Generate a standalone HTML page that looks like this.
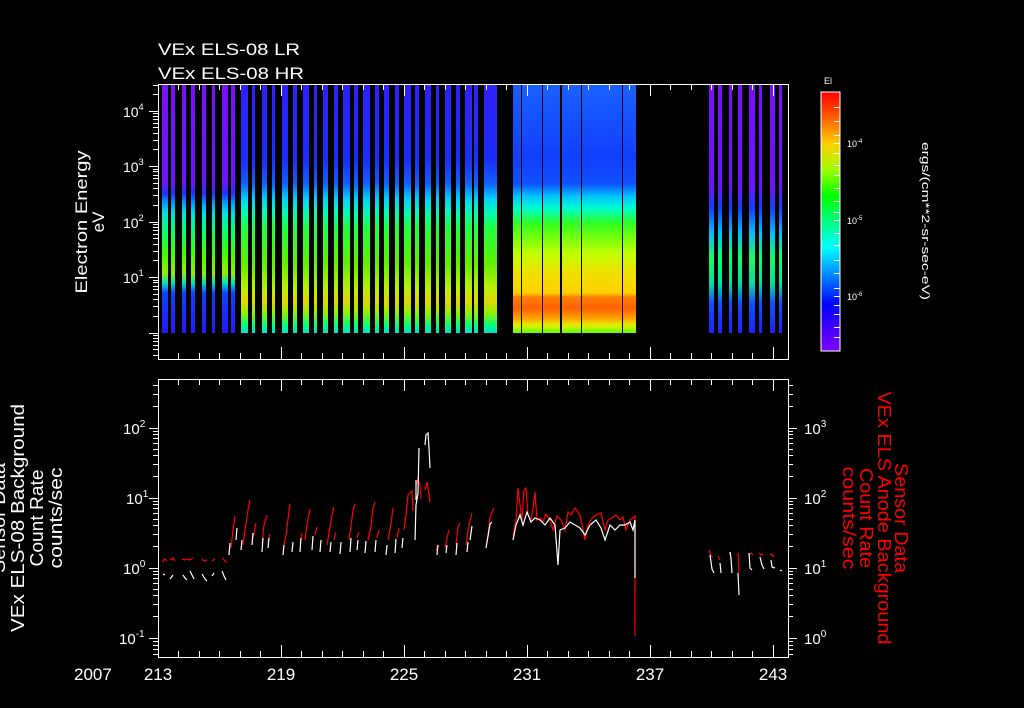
<!DOCTYPE html>
<html><head><meta charset="utf-8"><style>
html,body{margin:0;padding:0;background:#000;width:1024px;height:708px;overflow:hidden}
svg{display:block}
text{font-family:"Liberation Sans",sans-serif;fill:#fff}
</style></head><body>
<svg width="1024" height="708" viewBox="0 0 1024 708" xmlns="http://www.w3.org/2000/svg">
<defs>
<linearGradient id="gA" x1="0" y1="0" x2="0" y2="1">
<stop offset="0" stop-color="#7a10ff"/><stop offset=".4" stop-color="#6a14ff"/><stop offset=".44" stop-color="#2030ff"/><stop offset=".48" stop-color="#00a0ff"/><stop offset=".52" stop-color="#00e0e0"/><stop offset=".58" stop-color="#00ff80"/><stop offset=".68" stop-color="#40ff00"/><stop offset=".76" stop-color="#90f000"/><stop offset=".8" stop-color="#00e0c0"/><stop offset=".84" stop-color="#1040ff"/><stop offset="1" stop-color="#2418ff"/>
</linearGradient>
<linearGradient id="gB" x1="0" y1="0" x2="0" y2="1">
<stop offset="0" stop-color="#3020ff"/><stop offset=".3" stop-color="#1a2cff"/><stop offset=".4" stop-color="#1060ff"/><stop offset=".46" stop-color="#00d0ff"/><stop offset=".52" stop-color="#00ffb0"/><stop offset=".58" stop-color="#20ff40"/><stop offset=".72" stop-color="#60f000"/><stop offset=".82" stop-color="#b8f000"/><stop offset=".87" stop-color="#e0d800"/><stop offset=".92" stop-color="#90f000"/><stop offset=".97" stop-color="#00ff80"/><stop offset="1" stop-color="#00e0d0"/>
</linearGradient>
<linearGradient id="gC" x1="0" y1="0" x2="0" y2="1">
<stop offset="0" stop-color="#1a60ff"/><stop offset=".3" stop-color="#1040ff"/><stop offset=".4" stop-color="#1050ff"/><stop offset=".45" stop-color="#00c0ff"/><stop offset=".5" stop-color="#00ffd0"/><stop offset=".56" stop-color="#30ff20"/><stop offset=".68" stop-color="#c0ff00"/><stop offset=".76" stop-color="#f0e000"/><stop offset=".84" stop-color="#ffd000"/><stop offset=".855" stop-color="#ff8000"/><stop offset=".9" stop-color="#ff6000"/><stop offset=".94" stop-color="#ffa000"/><stop offset=".97" stop-color="#e0f000"/><stop offset="1" stop-color="#60ff00"/>
</linearGradient>
<linearGradient id="gD" x1="0" y1="0" x2="0" y2="1">
<stop offset="0" stop-color="#7a10ff"/><stop offset=".42" stop-color="#6a14ff"/><stop offset=".5" stop-color="#1040ff"/><stop offset=".6" stop-color="#00c0ff"/><stop offset=".7" stop-color="#10ff60"/><stop offset=".8" stop-color="#00e0a0"/><stop offset=".88" stop-color="#1050ff"/><stop offset="1" stop-color="#2020ff"/>
</linearGradient>
<linearGradient id="cb" x1="0" y1="0" x2="0" y2="1">
<stop offset="0" stop-color="#ff0000"/><stop offset=".1" stop-color="#ff6000"/><stop offset=".2" stop-color="#ffd000"/><stop offset=".3" stop-color="#a0ff00"/><stop offset=".4" stop-color="#00ff00"/><stop offset=".6" stop-color="#00ffff"/><stop offset=".7" stop-color="#0090ff"/><stop offset=".82" stop-color="#0000ff"/><stop offset="1" stop-color="#8000ff"/>
</linearGradient>
</defs>

<text x="158" y="55" font-size="17" textLength="142" lengthAdjust="spacingAndGlyphs">VEx ELS-08 LR</text>
<text x="158" y="79" font-size="17" textLength="146" lengthAdjust="spacingAndGlyphs">VEx ELS-08 HR</text>

<g>
<rect x="162" y="84" width="6" height="249" fill="url(#gA)"/>
<rect x="171" y="84" width="4" height="249" fill="url(#gA)"/>
<rect x="182" y="84" width="4" height="249" fill="url(#gA)"/>
<rect x="191" y="84" width="4" height="249" fill="url(#gA)"/>
<rect x="202" y="84" width="4" height="249" fill="url(#gA)"/>
<rect x="212" y="84" width="3" height="249" fill="url(#gA)"/>
<rect x="222" y="84" width="6" height="249" fill="url(#gA)"/>
<rect x="231" y="84" width="4" height="249" fill="url(#gA)"/>
<rect x="241" y="84" width="7" height="249" fill="url(#gB)"/>
<rect x="252" y="84" width="3" height="249" fill="url(#gB)"/>
<rect x="262" y="84" width="5" height="249" fill="url(#gB)"/>
<rect x="272" y="84" width="3" height="249" fill="url(#gB)"/>
<rect x="282" y="84" width="6" height="249" fill="url(#gB)"/>
<rect x="293" y="84" width="4" height="249" fill="url(#gB)"/>
<rect x="303" y="84" width="6" height="249" fill="url(#gB)"/>
<rect x="314" y="84" width="3" height="249" fill="url(#gB)"/>
<rect x="323" y="84" width="5" height="249" fill="url(#gB)"/>
<rect x="334" y="84" width="4" height="249" fill="url(#gB)"/>
<rect x="343" y="84" width="7" height="249" fill="url(#gB)"/>
<rect x="354" y="84" width="4" height="249" fill="url(#gB)"/>
<rect x="363" y="84" width="7" height="249" fill="url(#gB)"/>
<rect x="375" y="84" width="4" height="249" fill="url(#gB)"/>
<rect x="384" y="84" width="5" height="249" fill="url(#gB)"/>
<rect x="395" y="84" width="4" height="249" fill="url(#gB)"/>
<rect x="404" y="84" width="7" height="249" fill="url(#gB)"/>
<rect x="415" y="84" width="4" height="249" fill="url(#gB)"/>
<rect x="425" y="84" width="6" height="249" fill="url(#gB)"/>
<rect x="436" y="84" width="3" height="249" fill="url(#gB)"/>
<rect x="445" y="84" width="6" height="249" fill="url(#gB)"/>
<rect x="456" y="84" width="4" height="249" fill="url(#gB)"/>
<rect x="465" y="84" width="7" height="249" fill="url(#gB)"/>
<rect x="474" y="84" width="4" height="249" fill="url(#gB)"/>
<rect x="484" y="84" width="13" height="249" fill="url(#gB)"/>
<rect x="513" y="84" width="123" height="249" fill="url(#gC)"/>
<rect x="521" y="84" width="1" height="249" fill="#000"/>
<rect x="542" y="84" width="1" height="249" fill="#000"/>
<rect x="560" y="84" width="2" height="249" fill="#000"/>
<rect x="581" y="84" width="1" height="249" fill="#000"/>
<rect x="622" y="84" width="1" height="249" fill="#000"/>
<rect x="709" y="84" width="5" height="249" fill="url(#gD)"/>
<rect x="718" y="84" width="4" height="249" fill="url(#gD)"/>
<rect x="729" y="84" width="3" height="249" fill="url(#gD)"/>
<rect x="738" y="84" width="4" height="249" fill="url(#gD)"/>
<rect x="749" y="84" width="6" height="249" fill="url(#gD)"/>
<rect x="759" y="84" width="3" height="249" fill="url(#gD)"/>
<rect x="770" y="84" width="5" height="249" fill="url(#gD)"/>
<rect x="779" y="84" width="3" height="249" fill="url(#gD)"/>
</g>

<g stroke="#fff" stroke-width="1" fill="none" shape-rendering="crispEdges">
<path d="M158.5,84.5 H788.5 V359.5 H158.5 Z"/>
<path d="M149,333.5h9 M149,277.5h9 M149,222.5h9 M149,166.5h9 M149,111.5h9
M153,316.5h5 M153,306.5h5 M153,299.5h5 M153,294.5h5 M153,289.5h5 M153,286.5h5 M153,282.5h5 M153,280.5h5
M153,260.5h5 M153,251.5h5 M153,244.5h5 M153,238.5h5 M153,234.5h5 M153,230.5h5 M153,227.5h5 M153,224.5h5
M153,205.5h5 M153,195.5h5 M153,188.5h5 M153,183.5h5 M153,178.5h5 M153,175.5h5 M153,171.5h5 M153,169.5h5
M153,149.5h5 M153,140.5h5 M153,133.5h5 M153,127.5h5 M153,123.5h5 M153,119.5h5 M153,116.5h5 M153,113.5h5
M153,94.5h5 M153,85.5h5
M153,335.5h5 M153,338.5h5 M153,341.5h5 M153,345.5h5 M153,349.5h5 M153,355.5h5"/>
<path d="M178.5,84v6 M199.5,84v6 M219.5,84v6 M240.5,84v6 M260.5,84v6 M281.5,84v12 M301.5,84v6 M322.5,84v6 M342.5,84v6 M363.5,84v6 M383.5,84v6 M404.5,84v12 M424.5,84v6 M445.5,84v6 M465.5,84v6 M486.5,84v6 M506.5,84v6 M527.5,84v12 M547.5,84v6 M568.5,84v6 M588.5,84v6 M609.5,84v6 M629.5,84v6 M650.5,84v12 M670.5,84v6 M691.5,84v6 M711.5,84v6 M732.5,84v6 M752.5,84v6 M773.5,84v12"/>
<path d="M178.5,359v-6 M199.5,359v-6 M219.5,359v-6 M240.5,359v-6 M260.5,359v-6 M281.5,359v-12 M301.5,359v-6 M322.5,359v-6 M342.5,359v-6 M363.5,359v-6 M383.5,359v-6 M404.5,359v-12 M424.5,359v-6 M445.5,359v-6 M465.5,359v-6 M486.5,359v-6 M506.5,359v-6 M527.5,359v-12 M547.5,359v-6 M568.5,359v-6 M588.5,359v-6 M609.5,359v-6 M629.5,359v-6 M650.5,359v-12 M670.5,359v-6 M691.5,359v-6 M711.5,359v-6 M732.5,359v-6 M752.5,359v-6 M773.5,359v-12"/>
</g>
<g font-size="14">
<text x="123" y="117">10<tspan font-size="9" dy="-7">4</tspan></text>
<text x="123" y="172">10<tspan font-size="9" dy="-7">3</tspan></text>
<text x="123" y="228">10<tspan font-size="9" dy="-7">2</tspan></text>
<text x="123" y="283">10<tspan font-size="9" dy="-7">1</tspan></text>
</g>
<text transform="translate(87,222) rotate(-90)" text-anchor="middle" font-size="17" textLength="143" lengthAdjust="spacingAndGlyphs">Electron Energy</text>
<text transform="translate(104,222) rotate(-90)" text-anchor="middle" font-size="17">eV</text>

<text x="824" y="84" font-size="9">El</text>
<rect x="821" y="92" width="19" height="259" fill="url(#cb)" stroke="#fff" stroke-width="1"/>
<g stroke="#fff" shape-rendering="crispEdges">
<path d="M834,107.5h6 M834,121.5h6 M834,135.5h6 M834,143.5h6 M834,153.5h6 M834,165.5h6 M834,175.5h6 M834,188.5h6 M834,201.5h6 M834,212.5h6 M834,220.5h6 M834,233.5h6 M834,245.5h6 M834,260.5h6 M834,273.5h6 M834,288.5h6 M834,296.5h6 M834,305.5h6 M834,314.5h6 M834,327.5h6 M834,337.5h6"/>
</g>
<g font-size="9">
<text x="847" y="147">10<tspan font-size="6" dy="-4">-4</tspan></text>
<text x="847" y="224">10<tspan font-size="6" dy="-4">-5</tspan></text>
<text x="847" y="300">10<tspan font-size="6" dy="-4">-6</tspan></text>
</g>
<text transform="translate(922,221) rotate(90)" text-anchor="middle" font-size="11" textLength="158" lengthAdjust="spacingAndGlyphs">ergs/(cm**2-sr-sec-eV)</text>

<g stroke="#fff" stroke-width="1" fill="none" shape-rendering="crispEdges">
<path d="M158.5,379.5 H788.5 V657.5 H158.5 Z"/>
<path d="M149,638.5h9 M149,568.5h9 M149,498.5h9 M149,428.5h9
M153,616.5h5 M153,604.5h5 M153,595.5h5 M153,589.5h5 M153,583.5h5 M153,578.5h5 M153,574.5h5 M153,571.5h5
M153,546.5h5 M153,534.5h5 M153,525.5h5 M153,519.5h5 M153,513.5h5 M153,508.5h5 M153,504.5h5 M153,501.5h5
M153,476.5h5 M153,464.5h5 M153,455.5h5 M153,449.5h5 M153,443.5h5 M153,438.5h5 M153,434.5h5 M153,431.5h5
M153,406.5h5 M153,394.5h5 M153,385.5h5
M153,641.5h5 M153,645.5h5 M153,649.5h5 M153,654.5h5"/>
<path d="M788,638.5h9 M788,568.5h9 M788,498.5h9 M788,428.5h9
M788,616.5h5 M788,604.5h5 M788,595.5h5 M788,589.5h5 M788,583.5h5 M788,578.5h5 M788,574.5h5 M788,571.5h5
M788,546.5h5 M788,534.5h5 M788,525.5h5 M788,519.5h5 M788,513.5h5 M788,508.5h5 M788,504.5h5 M788,501.5h5
M788,476.5h5 M788,464.5h5 M788,455.5h5 M788,449.5h5 M788,443.5h5 M788,438.5h5 M788,434.5h5 M788,431.5h5
M788,406.5h5 M788,394.5h5 M788,385.5h5
M788,641.5h5 M788,645.5h5 M788,649.5h5 M788,654.5h5"/>
<path d="M178.5,379v6 M199.5,379v6 M219.5,379v6 M240.5,379v6 M260.5,379v6 M281.5,379v12 M301.5,379v6 M322.5,379v6 M342.5,379v6 M363.5,379v6 M383.5,379v6 M404.5,379v12 M424.5,379v6 M445.5,379v6 M465.5,379v6 M486.5,379v6 M506.5,379v6 M527.5,379v12 M547.5,379v6 M568.5,379v6 M588.5,379v6 M609.5,379v6 M629.5,379v6 M650.5,379v12 M670.5,379v6 M691.5,379v6 M711.5,379v6 M732.5,379v6 M752.5,379v6 M773.5,379v12"/>
<path d="M178.5,657v-6 M199.5,657v-6 M219.5,657v-6 M240.5,657v-6 M260.5,657v-6 M281.5,657v-12 M301.5,657v-6 M322.5,657v-6 M342.5,657v-6 M363.5,657v-6 M383.5,657v-6 M404.5,657v-12 M424.5,657v-6 M445.5,657v-6 M465.5,657v-6 M486.5,657v-6 M506.5,657v-6 M527.5,657v-12 M547.5,657v-6 M568.5,657v-6 M588.5,657v-6 M609.5,657v-6 M629.5,657v-6 M650.5,657v-12 M670.5,657v-6 M691.5,657v-6 M711.5,657v-6 M732.5,657v-6 M752.5,657v-6 M773.5,657v-12"/>
</g>
<g font-size="15">
<text x="123" y="434">10<tspan font-size="10" dy="-7">2</tspan></text>
<text x="126" y="504">10<tspan font-size="10" dy="-7">1</tspan></text>
<text x="123" y="574">10<tspan font-size="10" dy="-7">0</tspan></text>
<text x="119" y="644">10<tspan font-size="10" dy="-7">-1</tspan></text>
<text x="804" y="434">10<tspan font-size="10" dy="-7">3</tspan></text>
<text x="804" y="504">10<tspan font-size="10" dy="-7">2</tspan></text>
<text x="804" y="574">10<tspan font-size="10" dy="-7">1</tspan></text>
<text x="804" y="644">10<tspan font-size="10" dy="-7">0</tspan></text>
</g>

<g font-size="17">
<text x="74" y="680">2007</text>
<text x="158" y="680" text-anchor="middle">213</text>
<text x="281" y="680" text-anchor="middle">219</text>
<text x="404" y="680" text-anchor="middle">225</text>
<text x="527" y="680" text-anchor="middle">231</text>
<text x="650" y="680" text-anchor="middle">237</text>
<text x="773" y="680" text-anchor="middle">243</text>
</g>

<g font-size="18">
<text transform="translate(5,518) rotate(-90)" text-anchor="middle" textLength="110" lengthAdjust="spacingAndGlyphs">Sensor Data</text>
<text transform="translate(24,518) rotate(-90)" text-anchor="middle" textLength="228" lengthAdjust="spacingAndGlyphs">VEx ELS-08 Background</text>
<text transform="translate(43,518) rotate(-90)" text-anchor="middle" textLength="97" lengthAdjust="spacingAndGlyphs">Count Rate</text>
<text transform="translate(62,518) rotate(-90)" text-anchor="middle" textLength="101" lengthAdjust="spacingAndGlyphs">counts/sec</text>
</g>
<g font-size="18">
<text transform="translate(895,518) rotate(90)" text-anchor="middle" style="fill:#ff0000" textLength="110" lengthAdjust="spacingAndGlyphs">Sensor Data</text>
<text transform="translate(878,518) rotate(90)" text-anchor="middle" style="fill:#ff0000" textLength="253" lengthAdjust="spacingAndGlyphs">VEx ELS Anode Background</text>
<text transform="translate(860,518) rotate(90)" text-anchor="middle" style="fill:#ff0000" textLength="100" lengthAdjust="spacingAndGlyphs">Count Rate</text>
<text transform="translate(843,518) rotate(90)" text-anchor="middle" style="fill:#ff0000" textLength="103" lengthAdjust="spacingAndGlyphs">counts/sec</text>
</g>

<g fill="none" stroke-width="1.2">
<path stroke="#ff0000" d="M162,562 l3,-3 l2,2 M170,560 l3,-2 l2,3 M182,559 l3,1 l2,-1 l3,1 M190,560 l3,-2 M202,559 l2,2 l3,-1 M212,561 l3,-2 M222,558 l3,3 l2,1
M231,548 l2,-18 l2,-14 M243,545 l2,-15 l3,-20 l2,-10 M252,540 l2,-6 l2,-11 M262,545 l2,-20 l3,-10 M268,542 l2,-8 M284,545 l2,-10 M286,535 l2,-16 l2,-15 M300,545 l2,-12 M305,540 l2,-15 l3,-16 M315,535 l2,-8 M327,545 l2,-12 l3,-18 l2,-8 M334,540 l2,-8 M349,540 l2,-14 l2,-16 l2,-6 M357,538 l2,-6 M368,540 l3,-14 l2,-18 l2,-6 M377,538 l2,-8 M388,540 l3,-16 l2,-16 M397,538 l2,-10 M404,530 l2,-15 l2,-20 l2,-2 l2,-2 l1,20 M416,485 l2,-6 l2,6 l1,14 M425,490 l2,-8 l2,12 l1,8
M436,551 l2,-6 M445,548 l2,-10 l2,-8 M456,545 l2,-18 l2,-4 M466,545 l2,-14 l2,-10 l2,-8 M486,548 l2,-12 l2,-18 l2,-6 l2,-4
M513,536 L516,520 L518,488 L520,505 L522,520 L524,490 L526,488 L528,515 L531,520 L533,508 L535,492 L537,520 L540,518 L543,522 L546,514 L550,520 L553,530 L557,516 L561,520 L565,530 L568,512 L571,515 L575,508 L580,515 L585,540 L588,525 L592,518 L596,515 L601,513 L605,530 L608,520 L612,518 L616,515 L620,520 L623,517 L626,530 L630,520 L633,518 L635,516 L635,636
M709,550 l2,6 l2,1 M718,556 l2,4 M729,553 l2,2 M738,553 l1,20 M749,555 l2,-2 l2,2 M759,553 l2,2 l2,-1 M770,555 l2,-1 l2,3"/>
<path stroke="#ffffff" d="M163,574 l2,1 M170,579 l3,-4 M183,575 l2,3 l2,2 M190,571 l2,4 l2,4 M202,574 l3,5 l2,2 M212,576 l2,-3 M222,571 l2,5 l2,4
M229,555 l1,-12 M236,540 l1,-12 M241,550 l1,-10 M252,545 l1,-12 M262,552 l1,-14 M268,548 l1,-10 M283,555 l1,-10 M292,552 l1,-10 M300,552 l1,-14 M312,550 l1,-14 M320,552 l1,-12 M330,552 l1,-10 M340,554 l1,-12 M350,552 l1,-14 M357,550 l1,-10 M365,553 l1,-12 M375,552 l1,-12 M386,555 l1,-10 M395,553 l1,-14 M402,548 l1,-10
M415,540 l1,-35 l2,-12 l1,-45 M425,445 l1,-10 l2,-2 l1,15 l1,20 M416,500 l0,-20
M437,555 l1,-10 M446,553 l1,-8 M456,555 l1,-12 M467,552 l1,-10 M470,540 l2,-14 M486,548 l2,-12 l2,-12 l2,-2
M513,540 L516,525 L520,515 L523,525 L527,512 L531,522 L535,518 L540,520 L545,525 L550,518 L555,525 L558,565 L560,530 L565,528 L570,522 L575,525 L580,528 L585,535 L590,525 L596,520 L601,528 L605,540 L610,525 L615,530 L620,525 L625,525 L630,522 L633,530 L635,520 L635,578
M710,555 l2,14 l2,4 M720,563 l1,10 M730,552 l1,6 l1,15 M738,573 l1,22 M749,553 l1,15 l2,2 M760,557 l2,8 l2,4 M771,560 l1,7 l3,1 M780,570 l2,1"/>
</g>
</svg>
</body></html>
